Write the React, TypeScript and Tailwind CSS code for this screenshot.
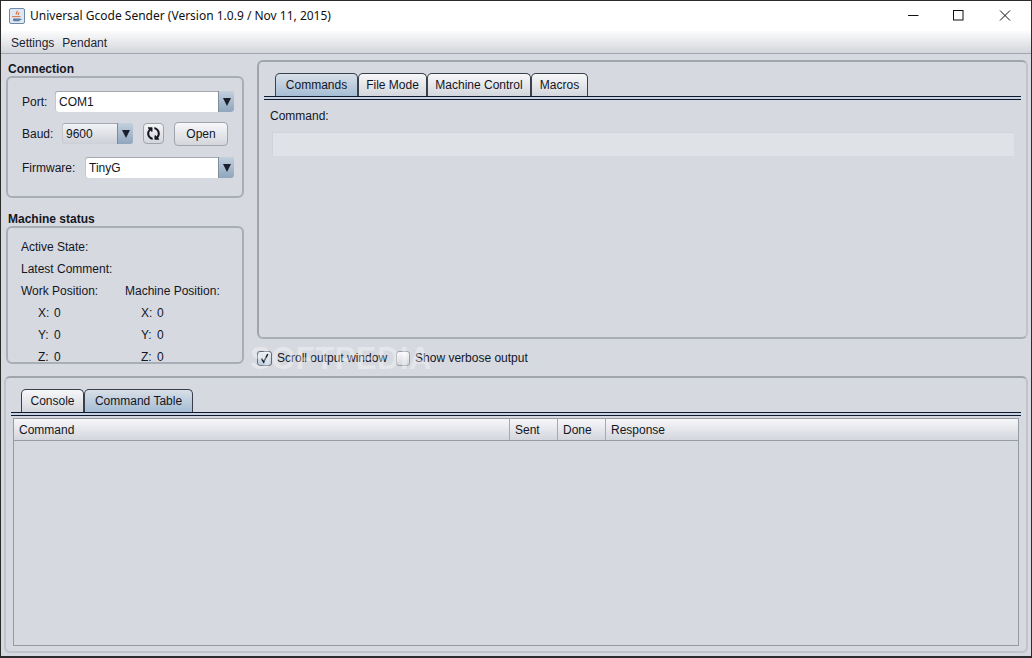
import { FaSyncAlt } from "react-icons/fa";

function Arrow() {
  return (
    <div className="flex h-full w-[16px] items-center justify-center rounded-r-[3px] border-l border-[#7f8b99] bg-linear-to-b from-[#c3d0de] to-[#8fa6bd]">
      <div className="h-0 w-0 border-x-[4px] border-t-[8px] border-x-transparent border-t-[#1a1f2b]" />
    </div>
  );
}

function Combo({ value, className }: { value: string; className: string }) {
  return (
    <div className={`flex h-[21px] items-center rounded-[3px] bg-white shadow-[inset_0_1px_0_#a4a8b0,inset_1px_0_0_#c4c7cd] ${className}`}>
      <span className="flex-1 pl-[4px]">{value}</span>
      <Arrow />
    </div>
  );
}

function Tab({ label, active, className }: { label: string; active?: boolean; className: string }) {
  return (
    <div
      className={`flex h-[23px] items-center justify-center rounded-t-[5px] border border-b-0 border-[#39404c] ${
        active ? "bg-linear-to-b from-[#d8dfe7] to-[#a5bdd4]" : "bg-linear-to-b from-[#f7f7f9] to-[#d3d6dc]"
      } ${className}`}
    >
      {label}
    </div>
  );
}

function Rule() {
  return <div className="h-[4px] border-y border-[#10182b] bg-[#c5d3e4]" />;
}

function HeaderCell({ label, className }: { label: string; className: string }) {
  return <div className={`flex h-full items-center border-r border-[#a5a9b1] pl-[5px] ${className}`}>{label}</div>;
}

function StatusRow({ children }: { children: React.ReactNode }) {
  return <div className="flex h-[22px] shrink-0 items-center">{children}</div>;
}

function AxisRow({ axis }: { axis: string }) {
  return (
    <StatusRow>
      <span className="ml-[17px] w-[16px]">{axis}:</span>
      <span className="w-[87px]">0</span>
      <span className="w-[16px]">{axis}:</span>
      <span>0</span>
    </StatusRow>
  );
}

export default function App() {
  return (
    <div className="relative flex h-[658px] w-[1032px] flex-col overflow-hidden border border-b-2 border-[#2b2b2b] bg-[#d6d9e0] font-['Liberation_Sans',sans-serif] text-[12px] text-[#14161f]">
      {/* title bar */}
      <div className="flex h-[30px] shrink-0 items-center bg-white font-['Noto_Sans',sans-serif]">
        <svg className="ml-[8px]" width="16" height="16" viewBox="0 0 16 16">
          <rect x="0.5" y="0.5" width="15" height="15" rx="1.5" fill="#dfe8f2" stroke="#6f89a8" />
          <path d="M4 10.5h7v1.2c0 1-.8 1.5-1.5 1.5h-4c-.8 0-1.5-.5-1.5-1.5z" fill="#5f7fa5" />
          <path d="M11 10.8h1.6v1.2H11z" fill="#5f7fa5" />
          <path d="M8 3c1 1.2-1.6 2-.6 3.4M9.8 4.5c.6.9-1.2 1.4-.5 2.5" fill="none" stroke="#d9642a" strokeWidth="1.1" />
          <path d="M3 8.6h8.5" stroke="#d9642a" strokeWidth="0.9" />
        </svg>
        <span className="ml-[5px] flex-1 text-[#111]">Universal Gcode Sender (Version 1.0.9 / Nov 11, 2015)</span>
        <svg width="110" height="30" viewBox="0 0 110 30" className="mr-[13px]" fill="none" stroke="#111">
          <path d="M0 14.5h10.5" />
          <rect x="45.5" y="9.5" width="9.5" height="9.5" strokeWidth="1" />
          <path d="M92 9.5l10 10M102 9.5l-10 10" />
        </svg>
      </div>

      {/* menu bar */}
      <div className="flex h-[23px] shrink-0 items-center gap-[8px] border-b border-[#a2a6ae] bg-linear-to-b from-[#fcfcfd] to-[#d3d6dc] pl-[10px] pt-[1px] text-[#1e2430]">
        <span>Settings</span>
        <span>Pendant</span>
      </div>

      {/* top half */}
      <div className="flex h-[322px] shrink-0">
        <div className="w-[256px] shrink-0 pl-[5px]">
          <div className="mt-[8px] ml-[2px] h-[14px] text-[12px] leading-[14px] font-bold">Connection</div>
          <div className="h-[122px] w-[238px] rounded-[6px] border-2 border-[#a9adb5] pt-[13px] pl-[14px]">
            <div className="flex h-[21px] items-center">
              <span className="w-[33px]">Port:</span>
              <Combo value="COM1" className="w-[179px]" />
            </div>
            <div className="mt-[11px] flex h-[21px] items-center">
              <span className="w-[40px]">Baud:</span>
              <Combo value="9600" className="w-[71px] !bg-linear-to-b from-[#f4f5f7] to-[#cdd0d7] shadow-[inset_0_0_0_1px_#a4a8b0]" />
              <button className="ml-[10px] flex h-[21px] w-[21px] items-center justify-center rounded-[4px] border border-[#a0a4ac] bg-linear-to-b from-[#f4f5f7] to-[#d3d6dc] text-[#14161f]">
                <FaSyncAlt className="h-[13px] w-[13px] rotate-90" />
              </button>
              <button className="ml-[10px] mt-[1px] flex h-[24px] w-[54px] items-center justify-center rounded-[4px] border border-[#a0a4ac] bg-linear-to-b from-[#f8f8fa] to-[#d3d6dc]">
                Open
              </button>
            </div>
            <div className="mt-[13px] flex h-[21px] items-center">
              <span className="w-[63px]">Firmware:</span>
              <Combo value="TinyG" className="w-[149px]" />
            </div>
          </div>
          <div className="mt-[14px] ml-[2px] h-[14px] text-[12px] leading-[14px] font-bold">Machine status</div>
          <div className="flex h-[138px] w-[238px] flex-col overflow-hidden rounded-[6px] border-2 border-[#a9adb5] pt-[8px] pl-[13px]">
            <StatusRow>Active State:</StatusRow>
            <StatusRow>Latest Comment:</StatusRow>
            <StatusRow>
              <span className="w-[104px]">Work Position:</span>
              <span>Machine Position:</span>
            </StatusRow>
            <AxisRow axis="X" />
            <AxisRow axis="Y" />
            <AxisRow axis="Z" />
          </div>
        </div>

        <div className="flex-1">
          <div className="mt-[6px] mr-[3px] flex h-[279px] flex-col rounded-[6px] border-2 border-[#a0a4ac] border-r-[#c0c3c9] border-b-[#a9adb5] pt-[11px] pr-[5px] pl-[5px]">
            <div className="flex pl-[11px]">
              <Tab label="Commands" active className="w-[83px]" />
              <Tab label="File Mode" className="w-[69px]" />
              <Tab label="Machine Control" className="w-[104px]" />
              <Tab label="Macros" className="w-[57px]" />
            </div>
            <Rule />
            <div className="mt-[9px] pl-[6px] leading-[14px]">Command:</div>
            <div className="mt-[9px] mr-[7px] ml-[8px] h-[24px] bg-[#dfe2e6] shadow-[inset_1px_1px_0_#d0d3d9]" />
          </div>
          <div className="mt-[11px] flex h-[16px] items-center">
            <div className="flex h-[15px] w-[15px] items-center justify-center rounded-[3px] border border-[#5d6b7e] bg-linear-to-b from-[#eef1f5] to-[#bccbdb]">
              <svg width="11" height="11" viewBox="0 0 11 11" fill="none" stroke="#14161f" strokeWidth="1.5">
                <path d="M2.5 5.5l2.2 3.5L8.8 1" />
              </svg>
            </div>
            <span className="ml-[5px]">Scroll output window</span>
            <div className="ml-[9px] h-[15px] w-[14px] rounded-[3px] border border-[#9a9ea6] bg-linear-to-b from-[#fafafb] to-[#d3d6dc]" />
            <span className="ml-[5px]">Show verbose output</span>
          </div>
        </div>
      </div>

      {/* bottom panel */}
      <div className="mx-[3px] flex h-[277px] flex-col rounded-[6px] border-2 border-[#a0a4ac] border-r-[#c0c3c9] border-b-[#c0c3c9] border-l-[#c0c3c9] pt-[11px] pr-[5px] pl-[5px]">
        <div className="flex pl-[10px]">
          <Tab label="Console" className="w-[63px]" />
          <Tab label="Command Table" active className="w-[109px]" />
        </div>
        <Rule />
        <div className="mt-[2px] mr-[2px] ml-[2px] flex h-[228px] flex-col border border-[#969aa3]">
          <div className="flex h-[22px] shrink-0 items-center border-b border-[#969aa3] bg-linear-to-b from-[#f7f7f9] to-[#d3d6dc]">
            <HeaderCell label="Command" className="w-[496px]" />
            <HeaderCell label="Sent" className="w-[48px]" />
            <HeaderCell label="Done" className="w-[48px]" />
            <span className="pl-[5px]">Response</span>
          </div>
        </div>
      </div>

      {/* watermark */}
      <span className="pointer-events-none absolute top-[341px] left-[249px] text-[31px] leading-[34px] font-bold tracking-[0.5px] text-white/35">
        SOFTPEDIA
      </span>
    </div>
  );
}
